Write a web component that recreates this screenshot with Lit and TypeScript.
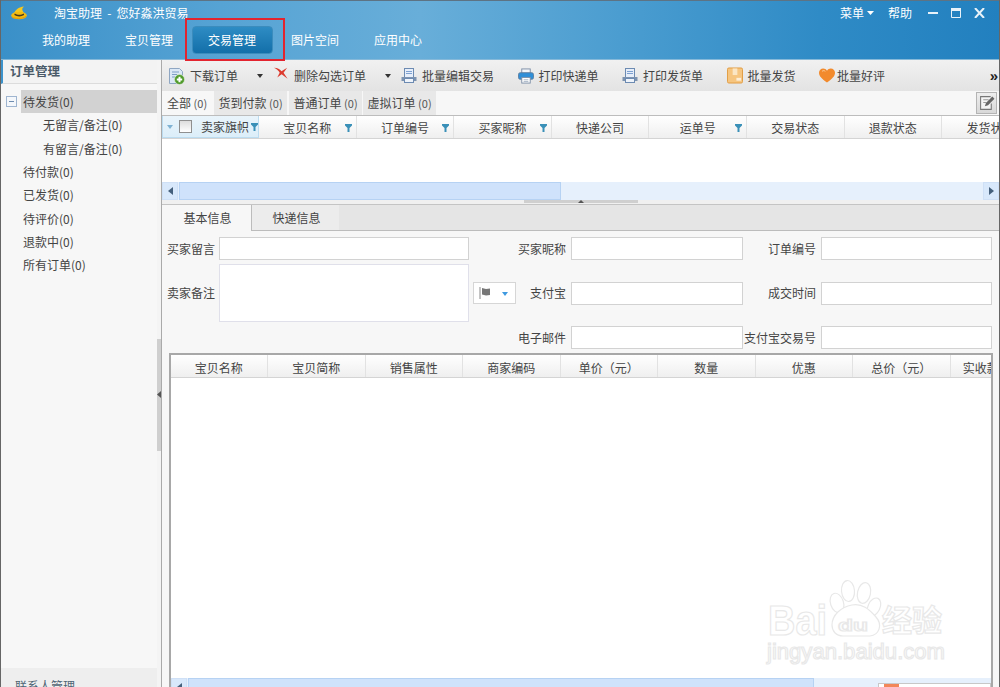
import { LitElement, html, css, svg } from "lit";
import { customElement } from "lit/decorators.js";

const icons: Record<string, any> = {
  download: svg`<svg class="ic" width="16" height="18" viewBox="0 0 16 18"><path d="M.5 1.500h10l3 3v12H.5z" fill="#dbe8f6" stroke="#8fa6c2"/><path d="M3 5h7M3 7.500h5M3 10h3" stroke="#7f9fc6"/><circle cx="10.500" cy="12.500" r="5" fill="#4f9a2a" stroke="#e8f2e0" stroke-width=".6"/><path d="M10.500 9.800v5.400M7.800 12.500h5.400" stroke="#fff" stroke-width="2"/></svg>`,
  del: svg`<svg class="ic up" width="16" height="14" viewBox="0 0 17 14"><path d="M1 1.500c4 .2 6 1.500 8 3.600l6-3.600-3.800 5.200 4.300 6.300-6.300-4.600-4.700 3.300 2.600-5C6 4.500 4 3 1 1.500z" fill="#dc3a2e"/></svg>`,
  batch: svg`<svg class="ic" width="16" height="17" viewBox="0 0 16 17"><rect x="3.500" y="1.500" width="9" height="14" fill="#e6eefa" stroke="#6d8bb2"/><path d="M5 4.500h6M5 6.500h6" stroke="#7da0d0"/><path d="M.5 10h15v4H.5z" fill="#7d93b0"/><rect x="3.500" y="11.500" width="9" height="4" fill="#eef3fa" stroke="#6d8bb2"/></svg>`,
  print: svg`<svg class="ic" width="16" height="16" viewBox="0 0 17 16"><rect x="4" y=".5" width="9" height="5" fill="#f4f6fa" stroke="#7c8ea6"/><rect x=".5" y="4.500" width="16" height="7" rx="2" fill="#2f8fd8" stroke="#5f7f9f"/><rect x="4" y="9.500" width="9" height="6" fill="#fff" stroke="#7c8ea6"/><path d="M6 12h5M6 13.800h5" stroke="#a9b6c6"/></svg>`,
  box: svg`<svg class="ic" width="16" height="17" viewBox="0 0 17 17"><rect x=".5" y=".5" width="16" height="16" rx="1.500" fill="#f6c57f" stroke="#e09a3e"/><rect x="6" y="1" width="5" height="7" fill="#fbe6c4"/><rect x="10" y="11" width="5" height="3" fill="#fdeed6"/></svg>`,
  heart: svg`<svg class="ic hrt" width="16" height="15" viewBox="0 0 16 15"><path d="M8 14.500C3 11 0 8.200 0 4.800 0 2.200 2 .5 4.200.5 5.800.5 7.200 1.300 8 2.800 8.800 1.300 10.200.5 11.800.5 14 .5 16 2.200 16 4.800c0 3.400-3 6.200-8 9.700z" fill="#f28a2c"/><path d="M3 3.400c1-1 2.400-1 3.300 0" stroke="#fbd0a0" fill="none"/></svg>`,
};

const tools = [
  { i: "download", t: "下载订单", drop: true },
  { i: "del", t: "删除勾选订单", drop: true },
  { i: "batch", t: "批量编辑交易" },
  { i: "print", t: "打印快递单" },
  { i: "batch", t: "打印发货单" },
  { i: "box", t: "批量发货" },
  { i: "heart", t: "批量好评" },
];
const tree = [
  { t: "待发货(0)", sel: true, exp: true },
  { t: "无留言/备注(0)", sub: true },
  { t: "有留言/备注(0)", sub: true },
  { t: "待付款(0)" }, { t: "已发货(0)" }, { t: "待评价(0)" }, { t: "退款中(0)" }, { t: "所有订单(0)" },
];
const upper = [
  { t: "宝贝名称", f: true }, { t: "订单编号", f: true }, { t: "买家昵称", f: true },
  { t: "快递公司" }, { t: "运单号", f: true }, { t: "交易状态" }, { t: "退款状态" }, { t: "发货状态" },
];
const lower = ["宝贝名称", "宝贝简称", "销售属性", "商家编码", "单价（元）", "数量", "优惠", "总价（元）", "实收款（元）"];
const filter = svg`<svg width="7" height="8" viewBox="0 0 7 8"><path d="M0 0h7v1.600L4.500 4v4h-2V4L0 1.600z" fill="#3a90b8"/></svg>`;

@customElement("app-root")
export class AppRoot extends LitElement {
  static styles = css`
    :host { display: block; width: 1000px; height: 687px; overflow: hidden; }
    * { box-sizing: border-box; }
    .app { position: relative; display: flex; flex-direction: column; height: 687px; overflow: hidden; background: #f7f7f7; color: #444;
      border-left: 1px solid #666; border-right: 1px solid #666;
      font: 12px/16px "Noto Sans CJK SC", "Microsoft YaHei", sans-serif; }
    .head { flex: none; height: 60px; border-top: 1px solid #5d7384; color: #fff; display: flex; flex-direction: column;
      background: linear-gradient(90deg, #3a90c8 0%, #56a3d4 22%, #68aed9 42%, #4b9dd0 62%, #2f8bc6 82%, #2280bf 100%); border-bottom: 1px solid #86b9d9; }
    .top { height: 25px; flex: none; display: flex; align-items: center; padding: 0 14px 2px 10px; }
    .logo { margin-right: 26px; }
    .ttl { flex: 1; word-spacing: 2.5px; }
    .ctl { display: flex; align-items: center; }
    .menu { margin-right: 14px; display: flex; align-items: center; gap: 3px; }
    .help { margin-right: 16px; }
    .win { display: block; margin-right: 13px; }
    .win:last-child { margin-right: 0; }
    .nav { display: flex; gap: 2px; padding-left: 24.500px; }
    .nav a { width: 81px; height: 28px; line-height: 28px; text-align: center; border-radius: 4px; position: relative; }
    .nav a.on { background: linear-gradient(#2e8cc4, #136fa9); border: 1px solid #3b8cbd; line-height: 26px; }
    .nav a.on::after { content: ""; position: absolute; left: -8px; right: -13px; top: -9px; bottom: -8px; border: 2px solid #e3242f; z-index: 3; }
    .body { flex: 1; min-height: 0; display: flex; }
    .side { flex: none; width: 156px; display: flex; flex-direction: column; background: #f7f7f7; }
    .sh { flex: none; height: 24px; line-height: 22px; padding-left: 7px; font-size: 12.500px; font-weight: 700; color: #4a5a68; background: #f3f3f3;
      border-left: 2px solid #3d93cc; border-bottom: 1px solid #dcdcdc; }
    .tree { flex: 1; padding-top: 6px; }
    .node { height: 23.330px; line-height: 23.330px; display: flex; align-items: center; padding-left: 22px; position: relative; }
    .node.sub { padding-left: 42px; }
    .node.sel { background: #d2d2d2; margin-left: 20px; padding-left: 2px; position: relative; }
    .exp { position: absolute; left: -15px; top: 6px; width: 11px; height: 11px; border: 1px solid #9fb5d0; background: #f4f7fb; }
    .exp::after { content: ""; display: block; margin: 4px 2px 0; height: 1px; background: #6f8db0; }
    .contact { flex: none; height: 19px; padding: 10px 0 0 14px; background: #eeeeee; color: #4e6474; overflow: hidden; line-height: 16px; }
    .vsp { flex: none; width: 5px; background: #f4f4f4; border-right: 1px solid #aaa; display: flex; align-items: center; padding-top: 42px; }
    .grip { width: 4px; height: 112px; background: #cfcfcf; display: flex; align-items: center; justify-content: center; }
    .main { flex: 1; min-width: 0; display: flex; flex-direction: column; overflow: hidden; }
    .tb { flex: none; height: 31px; padding-left: 7px; display: flex; align-items: center; background: linear-gradient(#f1f1f1, #e3e3e3); position: relative; }
    .tool { display: flex; align-items: center; gap: 5px; margin-right: 23.500px; white-space: nowrap; }
    .tool.dr { margin-right: 10px; }
    .ic { flex: none; display: block; }
    .ic.up { margin-top: -6px; }
    .ic.hrt { margin-right: -3px; }
    .ar { width: 0; height: 0; border: 3.500px solid transparent; border-top: 4px solid #333; border-bottom: 0; margin-left: 14px; }
    .more { margin-left: auto; margin-right: 1px; font: 700 15px/12px "Liberation Sans", sans-serif; color: #222; }
    .st { flex: none; height: 25px; display: flex; background: #f7f7f7; border-bottom: 1px solid #bdbdbd; align-items: stretch; }
    .st span { height: 24px; line-height: 24px; background: #e8e8e8; text-align: center; margin-right: 2px; white-space: nowrap; }
    .st span small { font-size: 11px; color: #555; }
    .st .a { background: #f7f7f7; width: 50px; }
    .st .b { width: 73px; } .st .c { width: 73px; margin-right: 1px; } .st .d { width: 73px; margin-right: 0; }
    .edit { margin: 1px 2px 0 auto; width: 21px; height: 22px; border: 1px solid #b4b4b4; background: linear-gradient(#eee, #d8d8d8); display: flex; align-items: center; justify-content: center; }
    .gh { flex: none; height: 23px; display: flex; overflow: hidden; background: linear-gradient(#fff, #efefef); border-bottom: 1px solid #d4d4d4; }
    .gc { flex: none; width: 97.600px; display: grid; grid-template-columns: 1fr auto 1fr; align-items: center; border-right: 1px solid #e2e2e2; line-height: 24px; white-space: nowrap; padding-right: 4px; padding-left: 4px; }
    .gc i { font-style: normal; grid-column: 3; justify-self: end; display: block; line-height: 0; }
    .gc b { font-weight: 400; grid-column: 2; }
    .g0 { flex: none; width: 97px; display: flex; align-items: center; background: linear-gradient(#e9f4fb, #dceef9); border: 1px solid #bcdcf0; border-top: 0; padding-left: 4px; line-height: 24px; }
    .g0 .dn { width: 0; height: 0; border: 3px solid transparent; border-top: 4px solid #7fb2d3; border-bottom: 0; margin-right: 6px; }
    .g0 .cb { width: 13px; height: 13px; border: 1px solid #8f8f8f; background: linear-gradient(#ddd, #fff); margin-right: 9px; flex: none; }
    .g0 b { font-weight: 400; margin-right: 2px; white-space: nowrap; }
    .g0 i { line-height: 0; display: block; }
    .ge { flex: none; height: 43px; background: #fff; }
    .sb { flex: none; height: 18px; display: flex; background: #e6f0fc; }
    .btn { flex: none; width: 16px; background: #d8e8fb; display: flex; align-items: center; justify-content: center; border: 1px solid #cfe0f6; }
    .thumb { flex: none; background: #cfe2fb; border: 1px solid #b6d2f3; margin-left: 1px; }
    .sb .t1 { width: 382px; }
    .sb .sp { flex: 1; }
    .hsp { flex: none; height: 5px; background: #f0f0f0; border-bottom: 1px solid #c4c4c4; display: flex; justify-content: center; }
    .hgrip { width: 114px; height: 3px; background: #cfcfcf; display: flex; justify-content: center; align-items: flex-start; }
    .tabs { flex: none; height: 26px; display: flex; background: #e5e5e5; border-bottom: 1px solid #bcbcbc; }
    .tabs span { line-height: 25px; text-align: center; }
    .tabs .a { width: 90px; height: 26px; background: #f7f7f7; border-right: 1px solid #bcbcbc; padding-left: 2px; }
    .tabs .b { width: 87px; background: #ececec; padding-left: 2px; }
    .form { flex: none; display: grid; padding: 6px 6px 0 7px; grid-template-columns: 46px 254px 47px 55px 172px 78px 171px;
      grid-template-rows: 23px 58px 23px; row-gap: 4px; align-items: center; }
    .form .f { height: 23px; background: #fff; border: 1px solid #d2d2d2; }
    .lbl { justify-self: end; white-space: nowrap; padding-right: 5px; }
    .lbl0 { justify-self: end; white-space: nowrap; }
    .fw { margin-left: 4px; }
    .form .f.tall { height: 58px; border-color: #e0e0ea; }
    .flag { margin-left: 4px; width: 43px; height: 22px; background: #fff; border: 1px solid #d6d6d6; display: flex; align-items: center; padding-left: 5px; gap: 10px; }
    .flag .tri { width: 0; height: 0; border: 3.500px solid transparent; border-top: 4px solid #3f9ae0; border-bottom: 0; margin-top: 1px; }
    .frame { flex: none; position: relative; margin: 4px 6px 0 7px; border: 2px solid #a8a8a8; border-bottom: 0; background: #fff; height: 340px; overflow: hidden; }
    .lg { height: 23px; display: flex; overflow: hidden; background: linear-gradient(#fff, #efefef); border-bottom: 1px solid #d4d4d4; }
    .lg span { flex: none; width: 97.500px; text-align: center; line-height: 25px; border-right: 1px solid #e2e2e2; white-space: nowrap; }
    .lg span:first-child { margin-left: -0.5px; }
    .lb { height: 300px; background: #fff; }
    .sb2 { height: 18px; display: flex; background: #e6f0fc; }
    .sb2 .t2 { width: 626px; }
    .wm { position: absolute; left: 596px; top: 224px; display: block; overflow: visible; }
    .pop { position: absolute; left: 877px; top: 683px; width: 113px; height: 8px; background: #fff; border: 1px solid #c8c8c8; padding-left: 5px; }
    .pop div { width: 15px; height: 8px; background: #f2875a; }
  `;

  render() {
    return html`<div class="app">
      <div class="head">
        <div class="top">
          <svg class="logo" width="17" height="14" viewBox="0 0 17 14"><path d="M3 7C5 3.500 8 .8 13 .5 11 2 10.800 3.500 12 5.500c.6 1 1 1.800 1.200 2.500z" fill="#f7c81e"/><ellipse cx="8" cy="9.500" rx="7.800" ry="3.800" fill="#f4bb12"/><path d="M3.800 7.500c2.500 1.700 6.500 1.700 9 0l.3 1.600c-2.800 1.700-7 1.700-9.800 0z" fill="#4a3a1a"/><path d="M1 11c3 2 10.500 2 14-.5" stroke="#e29a0c" fill="none"/></svg>
          <span class="ttl">淘宝助理 - 您好淼洪贸易</span>
          <div class="ctl">
            <span class="menu">菜单<svg width="7" height="4" viewBox="0 0 7 4"><path d="M0 0h7L3.500 4z" fill="#fff"/></svg></span>
            <span class="help">帮助</span>
            <svg class="win" width="10" height="10" viewBox="0 0 10 10"><path d="M0 4h10v2H0z" fill="#e8f2f9"/></svg>
            <svg class="win" width="10" height="10" viewBox="0 0 10 10"><path d="M.5.500h9v9h-9z" fill="none" stroke="#e8f2f9"/><path d="M0 0h10v3H0z" fill="#e8f2f9"/></svg>
            <svg class="win" width="11" height="10" viewBox="0 0 11 10"><path d="M1 0l9 10M10 0L1 10" stroke="#e8f2f9" stroke-width="2"/></svg>
          </div>
        </div>
        <div class="nav">
          <a>我的助理</a><a>宝贝管理</a><a class="on">交易管理</a><a>图片空间</a><a>应用中心</a>
        </div>
      </div>
      <div class="body">
        <div class="side">
          <div class="sh">订单管理</div>
          <div class="tree">
            ${tree.map((n) => html`<div class="node ${n.sub ? "sub" : ""} ${n.sel ? "sel" : ""}">${n.exp ? html`<span class="exp"></span>` : ""}${n.t}</div>`)}
          </div>
          <div class="contact">联系人管理</div>
        </div>
        <div class="vsp"><div class="grip"><svg width="4" height="7" viewBox="0 0 4 7"><path d="M4 0v7L0 3.500z" fill="#555"/></svg></div></div>
        <div class="main">
          <div class="tb">
            ${tools.map((t) => html`<div class="tool ${t.drop ? "dr" : ""}">${icons[t.i]}<span>${t.t}</span>${t.drop ? html`<span class="ar"></span>` : ""}</div>`)}
            <span class="more">»</span>
          </div>
          <div class="st">
            <span class="a">全部 <small>(0)</small></span><span class="b">货到付款 <small>(0)</small></span><span class="c">普通订单 <small>(0)</small></span><span class="d">虚拟订单 <small>(0)</small></span>
            <div class="edit"><svg width="16" height="16" viewBox="0 0 15 15"><path d="M11 1.500H1.500v12h10V8" fill="#f4f4f4" stroke="#777"/><path d="M4 4.500h5M4 7h3" stroke="#999"/><path d="M5.500 10.500l1-3L12.500 1.500l2 2-6 6z" fill="#666"/></svg></div>
          </div>
          <div class="gh">
            <div class="g0"><span class="dn"></span><span class="cb"></span><b>卖家旗帜</b><i>${filter}</i></div>
            ${upper.map((c) => html`<div class="gc"><b>${c.t}</b>${c.f ? html`<i>${filter}</i>` : ""}</div>`)}
          </div>
          <div class="ge"></div>
          <div class="sb">
            <div class="btn"><svg width="5" height="8" viewBox="0 0 5 8"><path d="M5 0v8L0 4z" fill="#45607c"/></svg></div>
            <div class="thumb t1"></div><div class="sp"></div>
            <div class="btn"><svg width="5" height="8" viewBox="0 0 5 8"><path d="M0 0v8l5-4z" fill="#45607c"/></svg></div>
          </div>
          <div class="hsp"><div class="hgrip"><svg width="6" height="3" viewBox="0 0 6 3"><path d="M0 3h6L3 0z" fill="#555"/></svg></div></div>
          <div class="tabs"><span class="a">基本信息</span><span class="b">快递信息</span></div>
          <div class="form">
            <span class="lbl0">买家留言</span><div class="f fw"></div><span></span><span class="lbl">买家昵称</span><div class="f"></div><span class="lbl">订单编号</span><div class="f"></div>
            <span class="lbl0">卖家备注</span><div class="f fw tall"></div>
            <div class="flag"><svg width="13" height="12" viewBox="0 0 13 12"><path d="M1 0v12" stroke="#888"/><path d="M3 1l4 1 4-.5V8L7 8.500 3 7.500z" fill="#777"/></svg><span class="tri"></span></div>
            <span class="lbl">支付宝</span><div class="f"></div><span class="lbl">成交时间</span><div class="f"></div>
            <span></span><span></span><span></span><span class="lbl">电子邮件</span><div class="f"></div><span class="lbl">支付宝交易号</span><div class="f"></div>
          </div>
          <div class="frame">
            <div class="lg">${lower.map((c) => html`<span>${c}</span>`)}</div>
            <div class="lb"></div>
            <div class="sb2">
              <div class="btn"><svg width="5" height="8" viewBox="0 0 5 8"><path d="M5 0v8L0 4z" fill="#45607c"/></svg></div>
              <div class="thumb t2"></div>
            </div>
            <svg class="wm" width="182" height="90" viewBox="0 0 182 90" fill="#fff" stroke="#e8e8e8" stroke-width="1.200">
              <ellipse cx="70" cy="24" rx="6.500" ry="10" transform="rotate(-18 70 24)"/>
              <ellipse cx="81" cy="12" rx="6.500" ry="10.500" transform="rotate(-5 81 12)" />
              <ellipse cx="97" cy="14" rx="6.500" ry="10.500" transform="rotate(12 97 14)"/>
              <ellipse cx="107" cy="28" rx="6" ry="9.500" transform="rotate(25 107 28)"/>
              <path d="M65 46c0-10 9-18 20-20 10-2 17 4 24 12 7 8 3 18-6 19H76c-7 0-11-5-11-11z"/>
              <text x="71" y="52" font-family="Liberation Sans, sans-serif" font-size="16" font-weight="700" textLength="30" lengthAdjust="spacingAndGlyphs">du</text>
              <text x="1" y="56" font-family="Liberation Sans, sans-serif" font-size="43" font-weight="700" textLength="59" lengthAdjust="spacingAndGlyphs">Bai</text>
              <text x="115" y="52" font-family="Noto Sans CJK SC, sans-serif" font-size="30" font-weight="700" textLength="60" lengthAdjust="spacingAndGlyphs">经验</text>
              <text x="0" y="80" font-family="Liberation Sans, sans-serif" font-size="22" textLength="178" lengthAdjust="spacingAndGlyphs">jingyan.baidu.com</text>
            </svg>
          </div>
        </div>
      </div>
      <div class="pop"><div></div></div>
    </div>`;
  }
}
